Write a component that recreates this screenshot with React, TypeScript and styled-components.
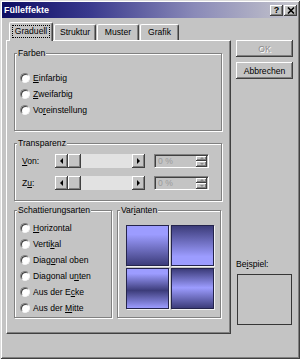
import React from 'react'
import styled, { createGlobalStyle } from 'styled-components'

const FACE = '#c4c4c4'
const LIGHT = '#9c9cff'
const DARK = '#3c3c7a'

const GlobalStyle = createGlobalStyle`
  html, body {
    margin: 0;
    padding: 0;
    background: ${FACE};
  }
  body {
    font-family: "Liberation Sans", Arial, sans-serif;
    font-size: 8.6px;
    color: #000;
  }
`

const raised = `
  background: ${FACE};
  box-shadow: inset -1px -1px #404040, inset 1px 1px #fff, inset -2px -2px #808080;
`

const Window = styled.div`
  width: 300px;
  height: 359px;
  box-sizing: border-box;
  padding: 2px;
  background: ${FACE};
  box-shadow: inset 1px 1px #dcdcdc, inset -1px -1px #404040, inset 2px 2px #fff,
    inset -2px -2px #808080;
  display: flex;
  flex-direction: column;
`

const TitleBar = styled.div`
  height: 16px;
  display: flex;
  align-items: center;
  padding: 0 1px 0 2px;
  background: linear-gradient(to right, #0c0c62 0%, #3a3a8e 30%, #8a8ab8 65%, #c6c6cc 100%);
`

const Title = styled.div`
  flex: 1;
  color: #fff;
  font-weight: bold;
  font-size: 9px;
`

const CaptionButtons = styled.div`
  display: flex;
  gap: 1px;
`

const CaptionButton = styled.div`
  ${raised}
  width: 13px;
  height: 11px;
  box-sizing: border-box;
  display: flex;
  align-items: center;
  justify-content: center;
  font-weight: bold;
  font-size: 9px;
  line-height: 1;
`

const Body = styled.div`
  display: flex;
  padding: 4px 0 0 4px;
`

const LeftCol = styled.div`
  width: 225px;
  display: flex;
  flex-direction: column;
`

const TabRow = styled.div`
  height: 18px;
  display: flex;
  align-items: flex-end;
  padding-left: 3px;
`

const Tab = styled.div<{ $w: number; $active?: boolean }>`
  width: ${(p) => p.$w}px;
  height: ${(p) => (p.$active ? 19 : 16)}px;
  margin-bottom: ${(p) => (p.$active ? -1 : 0)}px;
  position: relative;
  z-index: ${(p) => (p.$active ? 2 : 0)};
  box-sizing: border-box;
  background: ${FACE};
  border-top: 1px solid #fff;
  border-left: 1px solid #fff;
  border-right: 1px solid #404040;
  border-radius: 2px 2px 0 0;
  box-shadow: inset -1px 0 #808080;
  display: flex;
  justify-content: center;
  padding-top: ${(p) => (p.$active ? 3 : 2)}px;
  margin-right: 1px;
`

const TabLabel = styled.span<{ $focus?: boolean }>`
  height: 11px;
  line-height: 11px;
  padding: 0 2px;
  outline: ${(p) => (p.$focus ? '1px dotted #000' : 'none')};
`

const Panel = styled.div`
  height: 294px;
  box-sizing: border-box;
  border-top: 1px solid #fff;
  border-left: 1px solid #fff;
  border-right: 1px solid #404040;
  border-bottom: 1px solid #404040;
  box-shadow: inset -1px -1px #808080;
  padding: 7px 8px 0 7px;
  display: flex;
  flex-direction: column;
`

const Group = styled.fieldset<{ $h: number; $w?: number }>`
  margin: 0;
  padding: 0;
  min-width: 0;
  box-sizing: border-box;
  height: ${(p) => p.$h}px;
  width: ${(p) => (p.$w ? `${p.$w}px` : 'auto')};
  border: 1px solid #808080;
  box-shadow: inset 1px 1px #fff, 1px 1px #fff;
`

const Legend = styled.legend`
  margin-left: 2px;
  padding: 0 1px;
  line-height: 10px;
  height: 10px;
  background: ${FACE};
`

const RadioList = styled.div<{ $top: number }>`
  padding: ${(p) => p.$top}px 0 0 5px;
  display: flex;
  flex-direction: column;
`

const RadioRow = styled.div`
  height: 16px;
  display: flex;
  align-items: center;
  gap: 3px;
`

const RadioDot = styled.span`
  width: 10px;
  height: 10px;
  box-sizing: border-box;
  border-radius: 50%;
  background: #fff;
  border: 1px solid;
  border-color: #808080 #f4f4f4 #f4f4f4 #808080;
  box-shadow: inset 1px 1px #404040;
`

const Key = styled.span`
  text-decoration: underline;
`

const SliderList = styled.div`
  padding: 6px 0 0 7px;
  display: flex;
  flex-direction: column;
  gap: 8px;
`

const SliderRow = styled.div`
  height: 14px;
  display: flex;
  align-items: center;
`

const SliderLabel = styled.span`
  width: 33px;
`

const ScrollBar = styled.div`
  width: 90px;
  height: 14px;
  display: flex;
  background: #e2e2e2;
`

const ArrowButton = styled.div<{ $dir: 'left' | 'right' }>`
  ${raised}
  width: 13px;
  height: 14px;
  display: flex;
  align-items: center;
  justify-content: center;
  &::after {
    content: '';
    border-top: 3px solid transparent;
    border-bottom: 3px solid transparent;
    ${(p) => (p.$dir === 'left' ? 'border-right: 3px solid #000;' : 'border-left: 3px solid #000;')}
  }
`

const Thumb = styled.div`
  ${raised}
  width: 13px;
  height: 14px;
`

const Track = styled.div`
  flex: 1;
`

const SpinEdit = styled.div`
  margin-left: 9px;
  width: 55px;
  height: 14px;
  box-sizing: border-box;
  display: flex;
  align-items: center;
  border: 1px solid;
  border-color: #808080 #fff #fff #808080;
  box-shadow: inset 1px 1px #404040;
  padding: 1px 1px 1px 3px;
`

const SpinText = styled.span`
  flex: 1;
  color: #9a9a9a;
`

const SpinButtons = styled.div`
  width: 11px;
  height: 11px;
  display: flex;
  flex-direction: column;
`

const SpinHalf = styled.div<{ $up?: boolean }>`
  ${raised}
  flex: 1;
  display: flex;
  align-items: center;
  justify-content: center;
  &::after {
    content: '';
    border-left: 2px solid transparent;
    border-right: 2px solid transparent;
    ${(p) => (p.$up ? 'border-bottom: 2px solid #8a8a8a;' : 'border-top: 2px solid #8a8a8a;')}
  }
`

const BottomRow = styled.div`
  margin-top: 4px;
  display: flex;
  gap: 5px;
`

const SwatchGrid = styled.div`
  padding: 10px 0 0 8px;
  display: grid;
  grid-template-columns: 43px 43px;
  grid-template-rows: 41px 41px;
  gap: 2px;
`

const Swatch = styled.div<{ $bg: string }>`
  box-sizing: border-box;
  border: 1px solid #24244c;
  box-shadow: 1px 1px 0 #f2f2f2;
  background: ${(p) => p.$bg};
`

const RightCol = styled.div`
  width: 57px;
  margin-left: 5px;
  height: 312px;
  padding-top: 18px;
  box-sizing: border-box;
  display: flex;
  flex-direction: column;
  gap: 5px;
`

const Button = styled.div<{ $disabled?: boolean }>`
  ${raised}
  height: 17px;
  display: flex;
  align-items: center;
  justify-content: center;
  color: ${(p) => (p.$disabled ? '#8c8c8c' : '#000')};
  text-shadow: ${(p) => (p.$disabled ? '1px 1px #fff' : 'none')};
`

const Preview = styled.div`
  margin-top: auto;
  padding-bottom: 9px;
  display: flex;
  flex-direction: column;
  gap: 5px;
`

const PreviewLabel = styled.span`
  line-height: 10px;
`

const PreviewBox = styled.div`
  margin-left: 1px;
  width: 55px;
  height: 51px;
  box-sizing: border-box;
  border: 1px solid #363636;
`

const Radio = ({ children }: { children: React.ReactNode }) => (
  <RadioRow>
    <RadioDot />
    <span>{children}</span>
  </RadioRow>
)

const Slider = ({ label }: { label: React.ReactNode }) => (
  <SliderRow>
    <SliderLabel>{label}</SliderLabel>
    <ScrollBar>
      <ArrowButton $dir="left" />
      <Thumb />
      <Track />
      <ArrowButton $dir="right" />
    </ScrollBar>
    <SpinEdit>
      <SpinText>0 %</SpinText>
      <SpinButtons>
        <SpinHalf $up />
        <SpinHalf />
      </SpinButtons>
    </SpinEdit>
  </SliderRow>
)

const swatches = [
  `linear-gradient(to bottom, ${LIGHT} 0%, ${LIGHT} 22%, ${DARK} 100%)`,
  `linear-gradient(to bottom, ${DARK} 0%, ${LIGHT} 78%, ${LIGHT} 100%)`,
  `linear-gradient(to bottom, ${LIGHT} 0%, ${LIGHT} 12%, ${DARK} 55%, ${LIGHT} 100%)`,
  `linear-gradient(to bottom, ${DARK} 0%, ${LIGHT} 48%, ${DARK} 100%)`,
]

export default function App() {
  return (
    <>
      <GlobalStyle />
      <Window>
        <TitleBar>
          <Title>Fülleffekte</Title>
          <CaptionButtons>
            <CaptionButton>?</CaptionButton>
            <CaptionButton>
              <svg width="8" height="7" viewBox="0 0 8 7">
                <path d="M1 0.5 L7 6.5 M7 0.5 L1 6.5" stroke="#000" strokeWidth="1.6" />
              </svg>
            </CaptionButton>
          </CaptionButtons>
        </TitleBar>
        <Body>
          <LeftCol>
            <TabRow>
              <Tab $w={44} $active>
                <TabLabel $focus>Graduell</TabLabel>
              </Tab>
              <Tab $w={42}>
                <TabLabel>Struktur</TabLabel>
              </Tab>
              <Tab $w={42}>
                <TabLabel>Muster</TabLabel>
              </Tab>
              <Tab $w={39}>
                <TabLabel>Grafik</TabLabel>
              </Tab>
            </TabRow>
            <Panel>
              <Group $h={83}>
                <Legend>Farben</Legend>
                <RadioList $top={12}>
                  <Radio>
                    <Key>E</Key>infarbig
                  </Radio>
                  <Radio>
                    <Key>Z</Key>weifarbig
                  </Radio>
                  <Radio>
                    Vo<Key>r</Key>einstellung
                  </Radio>
                </RadioList>
              </Group>
              <Group $h={63} style={{ marginTop: 7 }}>
                <Legend>Transparenz</Legend>
                <SliderList>
                  <Slider
                    label={
                      <>
                        <Key>V</Key>on:
                      </>
                    }
                  />
                  <Slider
                    label={
                      <>
                        Z<Key>u</Key>:
                      </>
                    }
                  />
                </SliderList>
              </Group>
              <BottomRow>
                <Group $h={113} $w={98}>
                  <Legend>Schattierungsarten</Legend>
                  <RadioList $top={5}>
                    <Radio>
                      <Key>H</Key>orizontal
                    </Radio>
                    <Radio>
                      Verti<Key>k</Key>al
                    </Radio>
                    <Radio>
                      Diag<Key>o</Key>nal oben
                    </Radio>
                    <Radio>
                      Diagonal u<Key>n</Key>ten
                    </Radio>
                    <Radio>
                      Aus der E<Key>c</Key>ke
                    </Radio>
                    <Radio>
                      Aus der <Key>M</Key>itte
                    </Radio>
                  </RadioList>
                </Group>
                <Group $h={113} $w={104}>
                  <Legend>
                    Var<Key>i</Key>anten
                  </Legend>
                  <SwatchGrid>
                    {swatches.map((bg, i) => (
                      <Swatch key={i} $bg={bg} />
                    ))}
                  </SwatchGrid>
                </Group>
              </BottomRow>
            </Panel>
          </LeftCol>
          <RightCol>
            <Button $disabled>OK</Button>
            <Button>Abbrechen</Button>
            <Preview>
              <PreviewLabel>
                Be<Key>i</Key>spiel:
              </PreviewLabel>
              <PreviewBox />
            </Preview>
          </RightCol>
        </Body>
      </Window>
    </>
  )
}
